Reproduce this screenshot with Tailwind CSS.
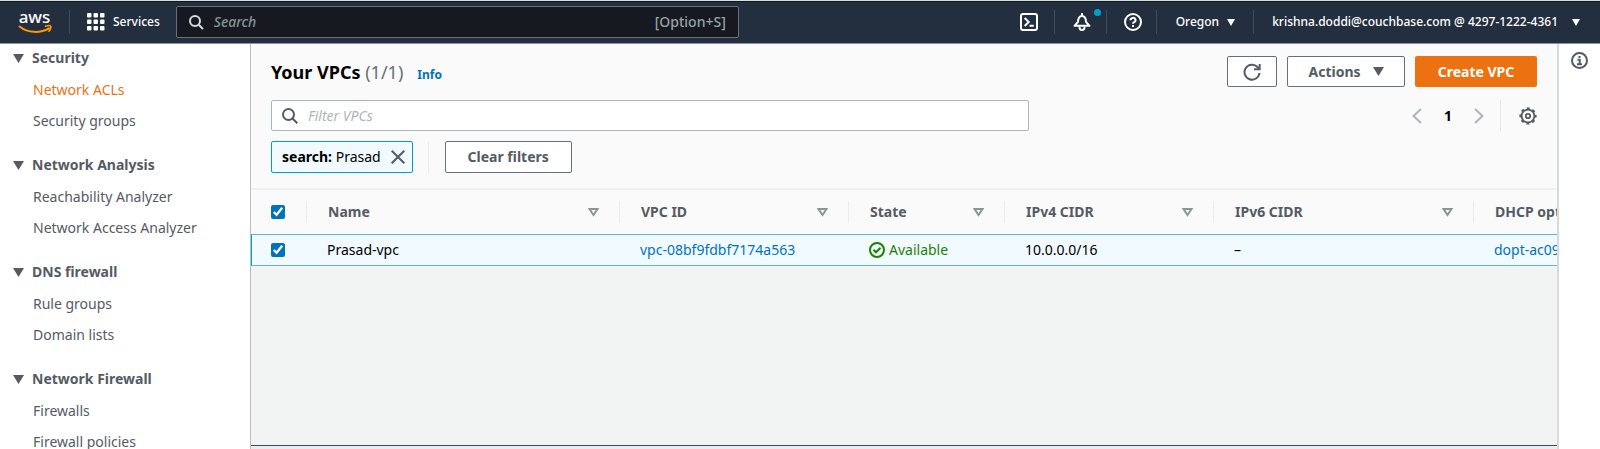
<!DOCTYPE html>
<html lang="en">
<head>
<meta charset="utf-8">
<title>Your VPCs</title>
<script src="https://cdn.jsdelivr.net/npm/@tailwindcss/browser@4"></script>
</head>
<body class="flex h-screen flex-col overflow-hidden bg-white font-['Noto_Sans',sans-serif] text-sm text-[#16191f]">

<header class="flex h-11 shrink-0 items-center border-t border-b border-t-[#d9dfd5] border-b-[#8d949c] bg-[#232f3e] text-xs font-medium text-white shadow-[inset_0_1px_0_#0b1626]">
  <a href="#" aria-label="AWS home" class="ml-4 block">
    <svg class="overflow-visible" width="38" height="28" viewBox="0 0 38 28" aria-hidden="true">
      <text x="18.500" y="15" text-anchor="middle" font-family="Noto Sans, sans-serif" font-size="17" font-weight="500" fill="#fff">aws</text>
      <path d="M3.500 18.500C12 25.200 24 25.500 33 20.300" fill="none" stroke="#f90" stroke-width="2" stroke-linecap="round"/>
      <path d="M29.500 18.200c2.500-.8 5-.7 5.300 0 .3.800-.4 3.300-1.900 5" fill="none" stroke="#f90" stroke-width="1.500" stroke-linecap="round"/>
    </svg>
  </a>
  <span class="ml-[15px] h-6 w-px bg-[#414d5c]"></span>
  <button class="ml-[17px] flex items-center gap-2">
    <svg width="18" height="18" viewBox="0 0 18 18" fill="#fff" aria-hidden="true">
      <rect x="0" y="0" width="4.500" height="4.500" rx="1"/><rect x="6.500" y="0" width="4.500" height="4.500" rx="1"/><rect x="13" y="0" width="4.500" height="4.500" rx="1"/>
      <rect x="0" y="6.500" width="4.500" height="4.500" rx="1"/><rect x="6.500" y="6.500" width="4.500" height="4.500" rx="1"/><rect x="13" y="6.500" width="4.500" height="4.500" rx="1"/>
      <rect x="0" y="13" width="4.500" height="4.500" rx="1"/><rect x="6.500" y="13" width="4.500" height="4.500" rx="1"/><rect x="13" y="13" width="4.500" height="4.500" rx="1"/>
    </svg>
    Services
  </button>
  <label class="ml-4 flex h-8 w-[563px] items-center rounded-xs border border-[#687078] bg-[#16191f] px-3 text-sm text-[#95a5a6]">
    <svg width="15" height="15" viewBox="0 0 15 15" fill="none" stroke="#d5dbdb" stroke-width="2" aria-hidden="true"><circle cx="6" cy="6" r="5"/><path d="M9.700 9.700 14 14"/></svg>
    <input type="search" aria-label="Search" placeholder="Search" class="ml-2.5 min-w-0 flex-1 bg-transparent italic outline-none placeholder:text-[#879596]">
    <span>[Option+S]</span>
  </label>
  <div class="ml-auto flex items-center">
    <button aria-label="CloudShell">
      <svg class="block" width="18" height="18" viewBox="0 0 18 18" fill="none" stroke="#fff" stroke-width="2" aria-hidden="true"><rect x="1" y="1" width="16" height="16" rx="2"/><path d="M4.700 5 8.700 9l-4 4M9.500 12.800h4.300"/></svg>
    </button>
    <span class="mx-4 h-6 w-px bg-[#414d5c]"></span>
    <button aria-label="Notifications" class="relative ml-0.5">
      <svg class="block" width="18" height="18" viewBox="0 0 18 18" fill="none" stroke="#fff" stroke-width="2" stroke-linejoin="round" aria-hidden="true"><path d="M9 0v2.500M1.500 12.800 5 8.800C5.200 4.800 6.600 3 9 3s3.800 1.800 4 5.800l3.500 4z"/><path d="M6.500 13.500v1a2.500 2.500 0 0 0 5 0v-1"/></svg>
      <span class="absolute -top-1 -right-2.5 size-[7px] rounded-full bg-[#00a1c9]"></span>
    </button>
    <span class="mx-[15px] h-6 w-px bg-[#414d5c]"></span>
    <button aria-label="Support" class="ml-0.5">
      <svg class="block" width="18" height="18" viewBox="0 0 18 18" fill="none" stroke="#fff" stroke-width="2" aria-hidden="true"><circle cx="9" cy="9" r="8"/><path d="M6.500 7.200a2.500 2.300 0 1 1 3.700 2c-.8.400-1.200.7-1.200 1.600M9 12v2"/></svg>
    </button>
    <span class="mr-[15px] ml-3.5 h-6 w-px bg-[#414d5c]"></span>
    <button class="ml-1 flex items-center gap-2">Oregon
      <svg width="8" height="7" viewBox="0 0 8 7" fill="#fff" aria-hidden="true"><path d="M0 0h8L4 7z"/></svg>
    </button>
    <span class="mx-[18px] h-6 w-px bg-[#414d5c]"></span>
    <button class="mr-5 flex items-center gap-3.5">krishna.doddi@couchbase.com @ 4297-1222-4361
      <svg width="8" height="7" viewBox="0 0 8 7" fill="#fff" aria-hidden="true"><path d="M0 0h8L4 7z"/></svg>
    </button>
  </div>
</header>

<div class="flex min-h-0 flex-1">
  <nav aria-label="VPC" class="w-[251px] shrink-0 overflow-hidden border-r border-[#b9bfc2] text-[#545b64]">
    <section class="mb-[15px]">
      <h2><button class="flex h-7 items-center gap-2 pl-[13px] font-bold"><svg width="11" height="9" viewBox="0 0 11 9" fill="#545b64" aria-hidden="true"><path d="M0 0h11L5.500 9z"/></svg>Security</button></h2>
      <ul class="mt-0.5 pl-[33px] leading-[31px]"><li><a href="#" class="text-[#ec7211]">Network ACLs</a></li><li><a href="#">Security groups</a></li></ul>
    </section>
    <section class="mb-[15px]">
      <h2><button class="flex h-7 items-center gap-2 pl-[13px] font-bold"><svg width="11" height="9" viewBox="0 0 11 9" fill="#545b64" aria-hidden="true"><path d="M0 0h11L5.500 9z"/></svg>Network Analysis</button></h2>
      <ul class="mt-0.5 pl-[33px] leading-[31px]"><li><a href="#">Reachability Analyzer</a></li><li><a href="#">Network Access Analyzer</a></li></ul>
    </section>
    <section class="mb-[15px]">
      <h2><button class="flex h-7 items-center gap-2 pl-[13px] font-bold"><svg width="11" height="9" viewBox="0 0 11 9" fill="#545b64" aria-hidden="true"><path d="M0 0h11L5.500 9z"/></svg>DNS firewall</button></h2>
      <ul class="mt-0.5 pl-[33px] leading-[31px]"><li><a href="#">Rule groups</a></li><li><a href="#">Domain lists</a></li></ul>
    </section>
    <section>
      <h2><button class="flex h-7 items-center gap-2 pl-[13px] font-bold"><svg width="11" height="9" viewBox="0 0 11 9" fill="#545b64" aria-hidden="true"><path d="M0 0h11L5.500 9z"/></svg>Network Firewall</button></h2>
      <ul class="mt-0.5 pl-[33px] leading-[31px]"><li><a href="#">Firewalls</a></li><li><a href="#">Firewall policies</a></li></ul>
    </section>
  </nav>

  <main class="flex min-w-0 flex-1 flex-col overflow-hidden border-r-2 border-[#d5dbdb] bg-[#f2f3f3]">
    <div class="border-b-2 border-[#eff0f0] bg-[#fafafa] px-5 pt-3 pb-[15px]">
      <div class="flex items-center gap-2.5">
        <div class="flex items-baseline gap-3.5">
          <h1 class="text-lg font-bold text-black">Your VPCs <span class="font-normal text-[#687078]">(1/1)</span></h1>
          <a href="#" class="text-xs font-bold text-[#0073bb]">Info</a>
        </div>
        <button aria-label="Refresh" class="ml-auto flex h-[31px] w-[50px] items-center justify-center rounded-xs border border-[#687078] bg-white">
          <svg width="18" height="18" viewBox="0 0 18 18" fill="none" stroke="#545b64" stroke-width="2" aria-hidden="true"><path d="M16.500 10A7.500 7.500 0 1 1 14.500 4l1.800 2"/><path d="M11 6.200h5.700V1"/></svg>
        </button>
        <button class="flex h-[31px] w-[118px] items-center justify-center gap-3 rounded-xs border border-[#687078] bg-white font-bold text-[#545b64]">Actions
          <svg width="11" height="9" viewBox="0 0 11 9" fill="#545b64" aria-hidden="true"><path d="M0 0h11L5.500 9z"/></svg>
        </button>
        <button class="h-[31px] w-[122px] rounded-xs bg-[#ec7211] font-bold text-white">Create VPC</button>
      </div>
      <div class="mt-[13px] flex items-center">
        <label class="flex h-[31px] w-[59.9%] items-center rounded-xs border border-[#aab7b8] bg-white px-2.5">
          <svg width="16" height="16" viewBox="0 0 16 16" fill="none" stroke="#545b64" stroke-width="2" aria-hidden="true"><circle cx="6.500" cy="6.500" r="5.500"/><path d="M10.500 10.500 15.300 15.300"/></svg>
          <input type="search" aria-label="Filter VPCs" placeholder="Filter VPCs" class="ml-2.5 min-w-0 flex-1 bg-transparent italic outline-none placeholder:text-[#aab7b8]">
        </label>
        <div class="ml-auto flex items-center">
          <button aria-label="Previous page"><svg class="block" width="10" height="16" viewBox="0 0 10 16" fill="none" stroke="#aab7b8" stroke-width="2" aria-hidden="true"><path d="M9 1 1.500 8 9 15"/></svg></button>
          <button class="mx-5 w-3 font-bold text-black">1</button>
          <button aria-label="Next page"><svg class="block" width="10" height="16" viewBox="0 0 10 16" fill="none" stroke="#aab7b8" stroke-width="2" aria-hidden="true"><path d="M1 1 8.500 8 1 15"/></svg></button>
          <span class="mr-[18px] ml-4 h-[31px] w-px bg-[#e6e9e9]"></span>
          <button aria-label="Preferences"><svg class="block" width="18" height="18" viewBox="0 0 18 18" fill="none" stroke="#545b64" aria-hidden="true"><circle cx="9" cy="9" r="6.400" stroke-width="1.800"/><circle cx="9" cy="9" r="7.700" stroke-width="1.800" stroke-dasharray="3.024 3.024" stroke-dashoffset="1.512"/><circle cx="9" cy="9" r="2.200" stroke-width="1.800"/></svg></button>
        </div>
      </div>
      <div class="mt-2.5 flex items-center">
        <span class="flex h-8 items-center rounded-xs border border-[#00a1c9] bg-[#f1faff] pr-[7px] pl-2.5 text-black"><span class="whitespace-pre"><b>search:</b> Prasad</span>
          <button aria-label="Remove filter" class="ml-2.5"><svg class="block" width="14" height="14" viewBox="0 0 14 14" fill="none" stroke="#545b64" stroke-width="2" aria-hidden="true"><path d="m.7.7 12.600 12.600M13.300.7.7 13.300"/></svg></button>
        </span>
        <span class="mr-4 ml-[15px] h-[31px] w-px bg-[#eaeded]"></span>
        <button class="h-8 w-[127px] rounded-xs border border-[#687078] bg-white font-bold text-[#545b64]">Clear filters</button>
      </div>
    </div>

    <table class="w-full table-fixed border-separate border-spacing-0 text-left whitespace-nowrap">
      <colgroup><col class="w-14"><col class="w-[313px]"><col class="w-[229px]"><col class="w-[156px]"><col class="w-[209px]"><col class="w-[260px]"><col></colgroup>
      <thead class="bg-[#fafafa] text-[#545b64]">
        <tr class="h-11">
          <th class="p-0"><div class="flex h-[22px] items-center border-r border-[#eaeded] pl-5"><input type="checkbox" checked aria-label="Select all VPCs" class="size-[14px] accent-[#0073bb]"></div></th>
          <th class="p-0"><div class="flex h-[22px] items-center justify-between border-r border-[#eaeded] pr-5 pl-[21px]">Name<svg width="11" height="9" viewBox="0 0 11 9" fill="none" stroke="#879596" stroke-width="2" aria-hidden="true"><path d="M1.500 1h8l-4 6z"/></svg></div></th>
          <th class="p-0"><div class="flex h-[22px] items-center justify-between border-r border-[#eaeded] pr-5 pl-[21px]">VPC ID<svg width="11" height="9" viewBox="0 0 11 9" fill="none" stroke="#879596" stroke-width="2" aria-hidden="true"><path d="M1.500 1h8l-4 6z"/></svg></div></th>
          <th class="p-0"><div class="flex h-[22px] items-center justify-between border-r border-[#eaeded] pr-5 pl-[21px]">State<svg width="11" height="9" viewBox="0 0 11 9" fill="none" stroke="#879596" stroke-width="2" aria-hidden="true"><path d="M1.500 1h8l-4 6z"/></svg></div></th>
          <th class="p-0"><div class="flex h-[22px] items-center justify-between border-r border-[#eaeded] pr-5 pl-[21px]">IPv4 CIDR<svg width="11" height="9" viewBox="0 0 11 9" fill="none" stroke="#879596" stroke-width="2" aria-hidden="true"><path d="M1.500 1h8l-4 6z"/></svg></div></th>
          <th class="p-0"><div class="flex h-[22px] items-center justify-between border-r border-[#eaeded] pr-5 pl-[21px]">IPv6 CIDR<svg width="11" height="9" viewBox="0 0 11 9" fill="none" stroke="#879596" stroke-width="2" aria-hidden="true"><path d="M1.500 1h8l-4 6z"/></svg></div></th>
          <th class="overflow-hidden p-0 pl-[21px]">DHCP option set</th>
        </tr>
      </thead>
      <tbody class="bg-[#f1faff] text-black">
        <tr class="h-8">
          <td class="border-y border-l border-[#5fb4d8] border-l-[#00a1c9] p-0 pl-[19px]"><input type="checkbox" checked aria-label="Select Prasad-vpc" class="block size-[14px] accent-[#0073bb]"></td>
          <td class="border-y border-[#5fb4d8] p-0 pl-5">Prasad-vpc</td>
          <td class="border-y border-[#5fb4d8] p-0 pl-5"><a href="#" class="text-[#0073bb]">vpc-08bf9fdbf7174a563</a></td>
          <td class="border-y border-[#5fb4d8] p-0 pl-5 text-[#1d8102]"><span class="flex items-center gap-1"><svg width="16" height="16" viewBox="0 0 16 16" fill="none" stroke="#1d8102" stroke-width="2" aria-hidden="true"><circle cx="8" cy="8" r="7"/><path d="M4.500 7.800 7 10.300l4.500-4.500"/></svg>Available</span></td>
          <td class="border-y border-[#5fb4d8] p-0 pl-5">10.0.0.0/16</td>
          <td class="border-y border-[#5fb4d8] p-0 pl-5">–</td>
          <td class="overflow-hidden border-y border-[#5fb4d8] p-0 pl-5"><a href="#" class="text-[#0073bb]">dopt-ac09</a></td>
        </tr>
      </tbody>
    </table>
    <div class="mt-auto h-1 border-t border-[#414d5c] bg-[#eaeded]"></div>
  </main>

  <aside aria-label="Help panel" class="w-[41px] shrink-0 bg-white pt-2 pl-3">
    <button aria-label="Open help"><svg class="block" width="17" height="17" viewBox="0 0 17 17" fill="none" stroke="#545b64" stroke-width="2" aria-hidden="true"><circle cx="8.500" cy="8.500" r="7.500"/><path d="M8.500 4v2M6.500 7.800h2.200V12M6 12.200h5"/></svg></button>
  </aside>
</div>
</body>
</html>
